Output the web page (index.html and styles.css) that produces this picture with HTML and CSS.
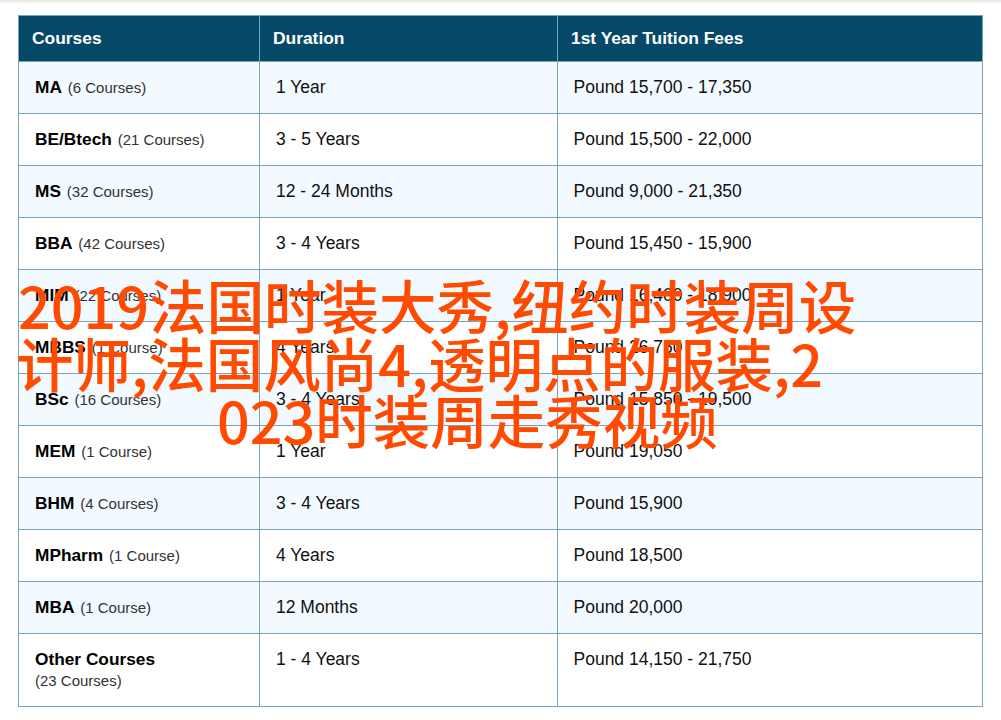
FILE: index.html
```html
<!DOCTYPE html>
<html lang="zh">
<head>
<meta charset="utf-8">
<title>Courses</title>
<link rel="stylesheet" href="styles.css">
</head>
<body>
<div class="topshade"></div>
<main class="wrap">
<table class="fees">
<colgroup><col class="c1"><col class="c2"><col class="c3"></colgroup>
<thead><tr><th>Courses</th><th>Duration</th><th>1st Year Tuition Fees</th></tr></thead>
<tbody>
<tr><td><b>MA</b> <span>(6 Courses)</span></td><td>1 Year</td><td>Pound 15,700 - 17,350</td></tr>
<tr><td><b>BE/Btech</b> <span>(21 Courses)</span></td><td>3 - 5 Years</td><td>Pound 15,500 - 22,000</td></tr>
<tr><td><b>MS</b> <span>(32 Courses)</span></td><td>12 - 24 Months</td><td>Pound 9,000 - 21,350</td></tr>
<tr><td><b>BBA</b> <span>(42 Courses)</span></td><td>3 - 4 Years</td><td>Pound 15,450 - 15,900</td></tr>
<tr><td><b>MIM</b> <span>(22 Courses)</span></td><td>1 Year</td><td>Pound 16,400 - 18,900</td></tr>
<tr><td><b>MBBS</b> <span>(1 Course)</span></td><td>4 Years</td><td>Pound 26,750</td></tr>
<tr><td><b>BSc</b> <span>(16 Courses)</span></td><td>3 - 4 Years</td><td>Pound 15,850 - 19,500</td></tr>
<tr><td><b>MEM</b> <span>(1 Course)</span></td><td>1 Year</td><td>Pound 19,050</td></tr>
<tr><td><b>BHM</b> <span>(4 Courses)</span></td><td>3 - 4 Years</td><td>Pound 15,900</td></tr>
<tr><td><b>MPharm</b> <span>(1 Course)</span></td><td>4 Years</td><td>Pound 18,500</td></tr>
<tr><td><b>MBA</b> <span>(1 Course)</span></td><td>12 Months</td><td>Pound 20,000</td></tr>
<tr class="last"><td><b>Other Courses</b><br><span>(23 Courses)</span></td><td>1 - 4 Years</td><td>Pound 14,150 - 21,750</td></tr>
</tbody>
</table>
<h1 class="banner"><span class="l1">2019法国时装大秀,纽约时装周设</span><span class="l2">计师,法国风尚4,透明点的服装,2</span><span class="l3">023时装周走秀视频</span></h1>
</main>
</body>
</html>
```
FILE: styles.css
```css
html, body {
  margin: 0;
  padding: 0;
  background: #fff;
  overflow: hidden;
}
.topshade {
  height: 3px;
  background: linear-gradient(#e6e6e6, #f6f6f6);
}
.wrap {
  position: relative;
  padding: 12px 18px 0;
  font-family: "Liberation Sans", Arial, sans-serif;
}
.fees {
  border-collapse: collapse;
  table-layout: fixed;
  width: 964px;
  color: #111;
  font-size: 17.5px;
}
.c1 { width: 241px; }
.c2 { width: 298px; }
.c3 { width: 425px; }
.fees th, .fees td {
  border: 1px solid #7ba3b8;
  text-align: left;
  vertical-align: top;
  box-sizing: border-box;
}
.fees th {
  height: 46px;
  background: #064867;
  color: #fff;
  font-size: 17.4px;
  font-weight: 700;
  padding: 12px 13px 0;
}
.fees td {
  height: 52px;
  padding: 15px 16px 0;
}
.fees td:last-child { padding-left: 15.5px; }
.fees tbody tr:nth-child(odd) td { background: #f2f9ff; }
.fees b {
  color: #000;
  font-size: 17.3px;
  margin-right: 1px;
}
.fees span {
  font-size: 15px;
  color: #333;
}
.fees .last td { height: 73px; }
.banner {
  position: absolute;
  left: 18px;
  top: 273px;
  margin: 0;
  color: #ff4a00;
  font: 500 57.5px/57.5px "Noto Sans CJK SC", sans-serif;
  white-space: nowrap;
}
.banner span { display: block; }
.l2 { margin-left: -2px; }
.l3 { margin-left: 199px; }
```
